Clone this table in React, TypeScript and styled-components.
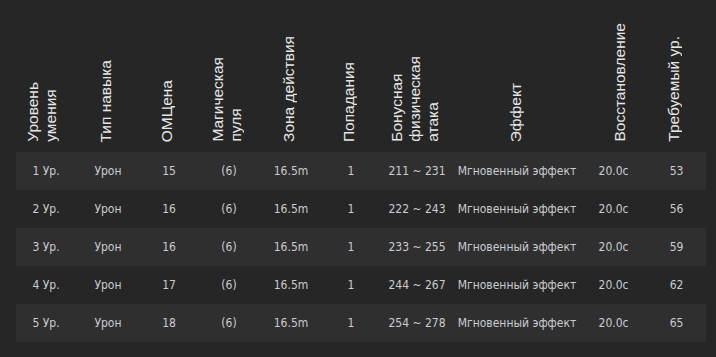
import React from "react";
import styled, { createGlobalStyle } from "styled-components";

const GlobalStyle = createGlobalStyle`
  html, body {
    margin: 0;
    background: #262626;
  }
`;

const columns = [
  { title: "Уровень\nумения", width: 60, shift: -3 },
  { title: "Тип навыка", width: 64, shift: 0 },
  { title: "ОМЦена", width: 58, shift: 0 },
  { title: "Магическая\nпуля", width: 62, shift: 0 },
  { title: "Зона действия", width: 62, shift: 0 },
  { title: "Попадания", width: 58, shift: 0 },
  { title: "Бонусная\nфизическая\nатака", width: 74, shift: 0 },
  { title: "Эффект", width: 126, shift: 2 },
  { title: "Восстановление", width: 67, shift: 18 },
  { title: "Требуемый ур.", width: 59, shift: 0 },
];

const rows = [
  ["1 Ур.", "Урон", "15", "(6)", "16.5m", "1", "211 ~ 231", "Мгновенный эффект", "20.0c", "53"],
  ["2 Ур.", "Урон", "16", "(6)", "16.5m", "1", "222 ~ 243", "Мгновенный эффект", "20.0c", "56"],
  ["3 Ур.", "Урон", "16", "(6)", "16.5m", "1", "233 ~ 255", "Мгновенный эффект", "20.0c", "59"],
  ["4 Ур.", "Урон", "17", "(6)", "16.5m", "1", "244 ~ 267", "Мгновенный эффект", "20.0c", "62"],
  ["5 Ур.", "Урон", "18", "(6)", "16.5m", "1", "254 ~ 278", "Мгновенный эффект", "20.0c", "65"],
];

const template = columns.map((c) => `${c.width}px`).join(" ");

export default function App() {
  return (
    <>
      <GlobalStyle />
      <Page>
        <HeadRow>
          {columns.map((c) => (
            <HeadCell key={c.title} $shift={c.shift}>
              <HeadText>{c.title}</HeadText>
            </HeadCell>
          ))}
        </HeadRow>
        {rows.map((row, i) => (
          <Row key={i} $odd={i % 2 === 0}>
            {row.map((v, j) => (
              <Cell key={j}>{v}</Cell>
            ))}
          </Row>
        ))}
      </Page>
    </>
  );
}

const Page = styled.div`
  padding: 0 10px 15px 16px;
  background: #262626;
`;

const HeadRow = styled.div`
  display: grid;
  grid-template-columns: ${template};
  height: 152px;
  align-items: end;
`;

const HeadCell = styled.div<{ $shift: number }>`
  display: flex;
  justify-content: center;
  padding: 0 ${(p) => 5 - Math.min(p.$shift, 0)}px 10px ${(p) => Math.max(p.$shift, 0)}px;
`;

const HeadText = styled.div`
  writing-mode: vertical-rl;
  transform: rotate(180deg);
  font-family: "Liberation Sans", Arial, sans-serif;
  font-size: 15.5px;
  line-height: 18px;
  color: #e6e6e6;
  white-space: pre-line;
`;

const Row = styled.div<{ $odd: boolean }>`
  display: grid;
  grid-template-columns: ${template};
  height: 38px;
  align-items: center;
  background: ${(p) => (p.$odd ? "#2f2f2f" : "#262626")};
`;

const Cell = styled.div`
  text-align: center;
  white-space: nowrap;
  font-family: "DejaVu Sans Condensed", "DejaVu Sans", sans-serif;
  font-stretch: condensed;
  font-size: 12px;
  color: #c9ccd0;
`;
